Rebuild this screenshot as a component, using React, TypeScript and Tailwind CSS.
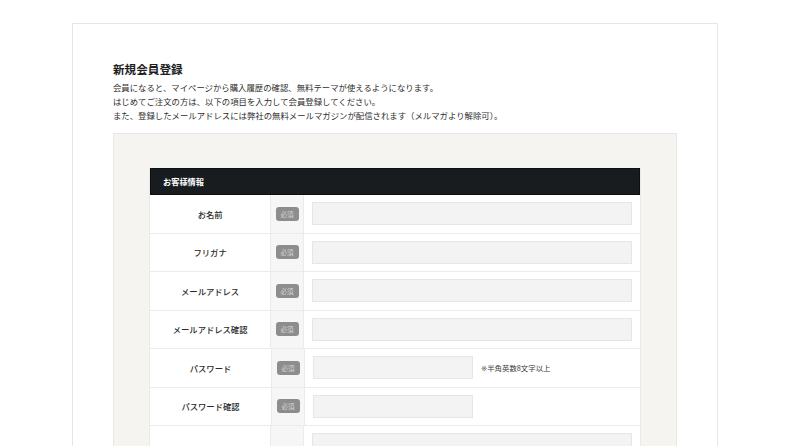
const rows = [
  { label: "お名前", short: false },
  { label: "フリガナ", short: false },
  { label: "メールアドレス", short: false },
  { label: "メールアドレス確認", short: false },
  { label: "パスワード", short: true, note: "半角英数8文字以上" },
  { label: "パスワード確認", short: true },
]

function Badge() {
  return (
    <span className="inline-flex h-[14px] w-[23px] items-center justify-center rounded-[3px] bg-[#8d8d8d] text-[6.5px] leading-none text-[#d6d6d6]">
      必須
    </span>
  )
}

export default function App() {
  return (
    <div
      className="h-[446px] w-[790px] overflow-hidden bg-white pt-[23px] pl-[72px]"
      style={{ fontFamily: '"Noto Sans CJK JP", "Noto Sans", sans-serif' }}
    >
      <div className="h-[430px] w-[646px] border border-[#e6e6e6] px-[40px] pt-[36px]">
        <h1 className="text-[11.6px] font-bold leading-[18px] text-[#1e1e1e]">新規会員登録</h1>
        <div className="mt-[2px] text-[8.4px] leading-[14px] text-[#2e2e2e]">
          <p>会員になると、マイページから購入履歴の確認、無料テーマが使えるようになります。</p>
          <p>はじめてご注文の方は、以下の項目を入力して会員登録してください。</p>
          <p>また、登録したメールアドレスには弊社の無料メールマガジンが配信されます（メルマガより解除可）。</p>
        </div>

        <div className="mt-[11px] h-[320px] border border-[#e8e7e3] bg-[#f5f4f1] px-[35px] pt-[34px]">
          <div className="border-x border-[#e9e9e9] bg-white">
            <div className="flex h-[27px] items-center border border-[#0d1013] bg-[#181c1f] pl-[12px] text-[8.2px] font-bold text-white">
              お客様情報
            </div>
            {rows.map(r => (
              <div key={r.label} className="flex h-[38.5px] border-b border-[#ebebeb]">
                <div className="flex w-[121px] items-center justify-center text-[8.3px] font-medium text-[#2a2a2a]">
                  {r.label}
                </div>
                <div className="flex w-[34px] items-center justify-center border-x border-[#ebebeb] bg-[#f6f6f6]">
                  <Badge />
                </div>
                <div className="flex flex-1 items-center gap-[8px] px-[8px]">
                  <div
                    className={`h-[23px] border border-[#e6e6e6] bg-[#f3f3f3] ${r.short ? "w-[160px]" : "w-[320px]"}`}
                  />
                  {r.note && (
                    <span className="text-[7.4px] text-[#3a3a3a]">
                      <span className="font-['DejaVu_Sans'] text-[#555]">※</span>
                      {r.note}
                    </span>
                  )}
                </div>
              </div>
            ))}
            <div className="flex h-[120px] border-b border-[#ebebeb]">
              <div className="w-[121px]" />
              <div className="w-[34px] border-x border-[#ebebeb] bg-[#f6f6f6]" />
              <div className="flex flex-1 flex-col gap-[8px] px-[8px] pt-[7px]">
                <div className="h-[23px] w-[320px] border border-[#e6e6e6] bg-[#f3f3f3]" />
                <div className="h-[23px] w-[320px] border border-[#e6e6e6] bg-[#f3f3f3]" />
              </div>
            </div>
          </div>
        </div>
      </div>
    </div>
  )
}
